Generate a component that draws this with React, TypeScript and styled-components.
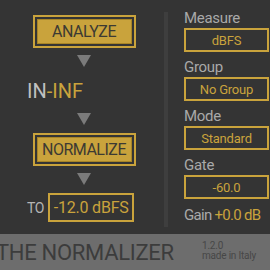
import React from "react";
import styled, { createGlobalStyle } from "styled-components";

const GOLD = "#c9a33c";
const BG = "#343434";

const Global = createGlobalStyle`
  html, body { margin: 0; padding: 0; background: ${BG}; }
  body { font-family: Roboto, "Noto Sans", sans-serif; }
`;

const Frame = styled.div`
  width: 270px;
  height: 270px;
  overflow: hidden;
  display: flex;
  flex-direction: column;
  background: ${BG};
`;

const Main = styled.div`
  height: 234px;
  display: flex;
`;

const LeftCol = styled.div`
  width: 164px;
  display: flex;
  flex-direction: column;
  align-items: center;
  padding-left: 4px;
  box-sizing: border-box;
  padding-top: 15px;
`;

const Divider = styled.div`
  width: 4px;
  margin-top: 12px;
  height: 215px;
  background: #3e3e3e;
`;

const RightCol = styled.div`
  margin-left: 16px;
  width: 85px;
  display: flex;
  flex-direction: column;
  padding-top: 8px;
`;

const BigButton = styled.div<{ $mt: number }>`
  margin-top: ${(p) => p.$mt}px;
  width: 103px;
  height: 33px;
  box-sizing: border-box;
  border: 2px solid ${GOLD};
  padding: 2px;
  display: flex;
`;

const ButtonFace = styled.div`
  flex: 1;
  background: ${GOLD};
  border: 1px solid #a88526;
  display: flex;
  align-items: center;
  justify-content: center;
  color: #3c3a33;
  font-size: 16px;
  letter-spacing: -0.5px;
`;

const Arrow = styled.div<{ $mt: number }>`
  margin-top: ${(p) => p.$mt}px;
  width: 0;
  height: 0;
  border-left: 7px solid transparent;
  border-right: 7px solid transparent;
  border-top: 12px solid #7b7b7b;
`;

const InRow = styled.div`
  align-self: flex-start;
  margin-left: 23px;
  margin-top: 13px;
  font-size: 20px;
  line-height: 22px;
  color: #c0c0c0;
  height: 22px;
  margin-bottom: 11px;
`;

const Gold = styled.span`
  color: ${GOLD};
`;

const ToRow = styled.div`
  align-self: flex-start;
  margin-left: 23px;
  margin-top: 8px;
  display: flex;
  align-items: center;
  gap: 4px;
`;

const ToLabel = styled.span`
  color: #b4b4b4;
  font-size: 14px;
  letter-spacing: -0.3px;
`;

const ValueBox = styled.div<{ $h: number }>`
  height: ${(p) => p.$h}px;
  box-sizing: border-box;
  border: 2px solid ${GOLD};
  color: ${GOLD};
  display: flex;
  align-items: center;
  justify-content: center;
  font-size: 13px;
  letter-spacing: -0.2px;
`;

const TargetBox = styled(ValueBox)`
  width: 86px;
  font-size: 16px;
  letter-spacing: -0.2px;
`;

const Label = styled.div<{ $mt: number }>`
  margin-top: ${(p) => p.$mt}px;
  color: #a9a9a9;
  font-size: 15px;
  line-height: 20px;
  height: 20px;
  letter-spacing: -0.3px;
`;

const GainRow = styled.div`
  margin-top: 8px;
  font-size: 15px;
  line-height: 17px;
  letter-spacing: -0.7px;
  white-space: nowrap;
  color: #a9a9a9;
`;

const Footer = styled.div`
  height: 36px;
  background: #6d6d6d;
  display: flex;
  align-items: center;
`;

const Title = styled.div`
  margin-left: -4px;
  font-size: 22px;
  letter-spacing: -0.3px;
  color: #3c3c3c;
  width: 206px;
  white-space: nowrap;
`;

const Version = styled.div`
  font-size: 10px;
  line-height: 10px;
  letter-spacing: -0.2px;
  color: #474747;
  margin-top: -2px;
`;

export default function App() {
  return (
    <Frame>
      <Global />
      <Main>
        <LeftCol>
          <BigButton $mt={0}>
            <ButtonFace>ANALYZE</ButtonFace>
          </BigButton>
          <Arrow $mt={7} />
          <InRow>
            IN<Gold>-INF</Gold>
          </InRow>
          <Arrow $mt={0} />
          <BigButton $mt={8}>
            <ButtonFace>NORMALIZE</ButtonFace>
          </BigButton>
          <Arrow $mt={7} />
          <ToRow>
            <ToLabel>TO</ToLabel>
            <TargetBox $h={29}>-12.0 dBFS</TargetBox>
          </ToRow>
        </LeftCol>
        <Divider />
        <RightCol>
          <Label $mt={0}>Measure</Label>
          <ValueBox $h={24}>dBFS</ValueBox>
          <Label $mt={5}>Group</Label>
          <ValueBox $h={24}>No Group</ValueBox>
          <Label $mt={5}>Mode</Label>
          <ValueBox $h={24}>Standard</ValueBox>
          <Label $mt={5}>Gate</Label>
          <ValueBox $h={24}>-60.0</ValueBox>
          <GainRow>
            Gain <Gold>+0.0 dB</Gold>
          </GainRow>
        </RightCol>
      </Main>
      <Footer>
        <Title>THE NORMALIZER</Title>
        <Version>
          1.2.0
          <br />
          made in Italy
        </Version>
      </Footer>
    </Frame>
  );
}
